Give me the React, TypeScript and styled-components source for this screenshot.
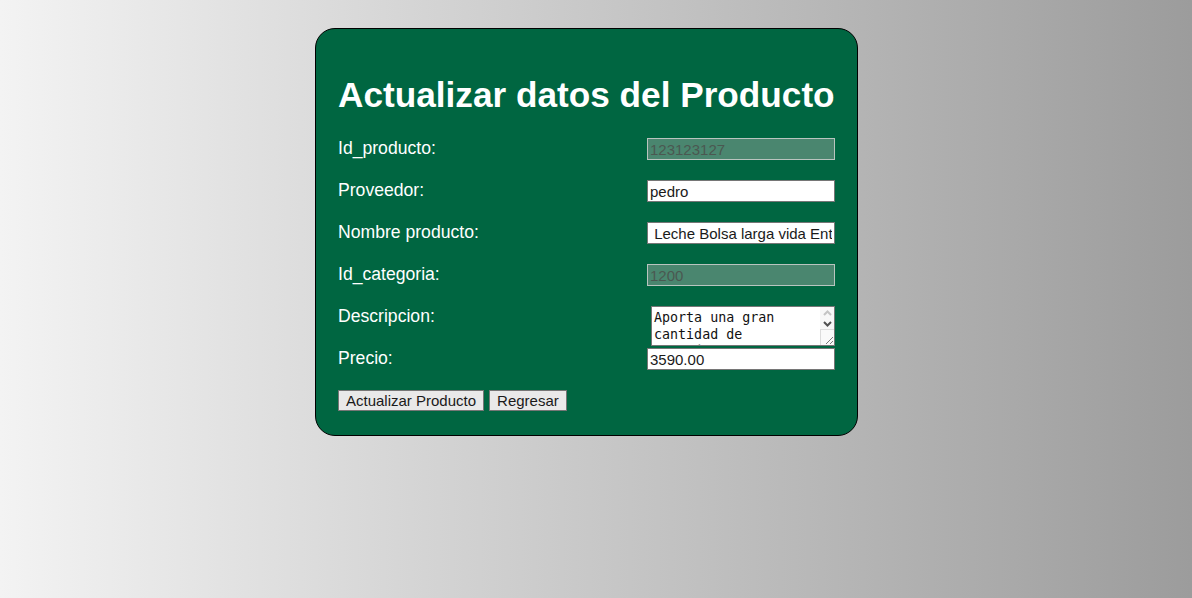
import styled, { createGlobalStyle } from "styled-components";

const GlobalStyle = createGlobalStyle`
  html, body {
    margin: 0;
    height: 100%;
  }
  body {
    background: linear-gradient(to right, #f3f3f3, #9c9c9c);
    font-family: "Liberation Sans", Arial, sans-serif;
  }
  #root {
    height: 100%;
  }
`;

const Page = styled.div`
  display: flex;
  justify-content: center;
  align-items: flex-start;
  padding: 28px 19px 0 0;
`;

const Card = styled.form`
  box-sizing: border-box;
  width: 543px;
  padding: 20px 22px 24px;
  background: #006641;
  border: 1px solid #000;
  border-radius: 20px;
  color: #fff;
`;

const Title = styled.h1`
  margin: 25px 0 23px;
  font-size: 35.2px;
  font-weight: 700;
  line-height: 41px;
  white-space: nowrap;
`;

const Row = styled.div`
  display: flex;
  justify-content: space-between;
  align-items: flex-start;
  height: 42px;
`;

const Label = styled.label`
  font-size: 17.6px;
  line-height: 20px;
`;

const Input = styled.input<{ $locked?: boolean }>`
  box-sizing: border-box;
  width: 188px;
  height: 22px;
  padding: 1px 2px;
  font-family: "Liberation Sans", Arial, sans-serif;
  font-size: 15px;
  border: 1px solid ${(p) => (p.$locked ? "#b9c4bf" : "#767676")};
  background: ${(p) => (p.$locked ? "#4a866f" : "#fff")};
  color: ${(p) => (p.$locked ? "#4a5851" : "#1a1a1a")};
  -webkit-text-fill-color: ${(p) => (p.$locked ? "#4a5851" : "#1a1a1a")};
  opacity: 1;
  border-radius: 0;
  outline: none;
`;

const AreaFrame = styled.div`
  box-sizing: border-box;
  display: flex;
  width: 184px;
  height: 40px;
  border: 1px solid #767676;
  background: #fff;
`;

const TextArea = styled.textarea`
  flex: 1;
  min-width: 0;
  box-sizing: border-box;
  height: 100%;
  padding: 2px 2px 0 2px;
  margin: 0;
  font-family: "DejaVu Sans Mono", monospace;
  font-size: 13.33px;
  line-height: 17px;
  border: none;
  background: transparent;
  color: #111;
  resize: none;
  overflow: hidden;
  outline: none;
`;

const ScrollTrack = styled.div`
  display: flex;
  flex-direction: column;
  width: 14px;
  background: #f7f7f7;
`;

const Arrow = styled.div`
  display: flex;
  align-items: center;
  justify-content: center;
  height: 11px;
`;

const Grip = styled.div`
  flex: 1;
  display: flex;
  align-items: flex-end;
  justify-content: flex-end;
  border-top: 1px solid #dcdcdc;
  border-left: 1px solid #dcdcdc;
  background: #fafafa;
`;

const Buttons = styled.div`
  display: flex;
  gap: 5px;
`;

const Button = styled.button`
  box-sizing: border-box;
  height: 21px;
  padding: 0 7px;
  font-family: "Liberation Sans", Arial, sans-serif;
  font-size: 15px;
  color: #1a1a1a;
  background: #e9e9e9;
  border: 1px solid #767676;
  border-radius: 0;
`;

function Chevron({ up, color }: { up?: boolean; color: string }) {
  return (
    <svg width="9" height="6" viewBox="0 0 9 6">
      <path
        d={up ? "M1 5 L4.5 1.5 L8 5" : "M1 1 L4.5 4.5 L8 1"}
        fill="none"
        stroke={color}
        strokeWidth="2"
      />
    </svg>
  );
}

export default function App() {
  return (
    <>
      <GlobalStyle />
      <Page>
        <Card onSubmit={(e) => e.preventDefault()}>
          <Title>Actualizar datos del Producto</Title>
          <Row>
            <Label>Id_producto:</Label>
            <Input $locked disabled defaultValue="123123127" />
          </Row>
          <Row>
            <Label>Proveedor:</Label>
            <Input defaultValue="pedro" />
          </Row>
          <Row>
            <Label>Nombre producto:</Label>
            <Input defaultValue=" Leche Bolsa larga vida Entera" />
          </Row>
          <Row>
            <Label>Id_categoria:</Label>
            <Input $locked disabled defaultValue="1200" />
          </Row>
          <Row>
            <Label>Descripcion:</Label>
            <AreaFrame>
              <TextArea defaultValue="Aporta una gran cantidad de proteínas, calcio y vitaminas para toda la familia." />
              <ScrollTrack>
                <Arrow>
                  <Chevron up color="#c4c4c4" />
                </Arrow>
                <Arrow>
                  <Chevron color="#505050" />
                </Arrow>
                <Grip>
                  <svg width="9" height="9" viewBox="0 0 9 9">
                    <path d="M1 8 L8 1 M5 8 L8 5" stroke="#7a7a7a" strokeWidth="1" />
                  </svg>
                </Grip>
              </ScrollTrack>
            </AreaFrame>
          </Row>
          <Row>
            <Label>Precio:</Label>
            <Input defaultValue="3590.00" />
          </Row>
          <Buttons>
            <Button type="submit">Actualizar Producto</Button>
            <Button type="button">Regresar</Button>
          </Buttons>
        </Card>
      </Page>
    </>
  );
}
